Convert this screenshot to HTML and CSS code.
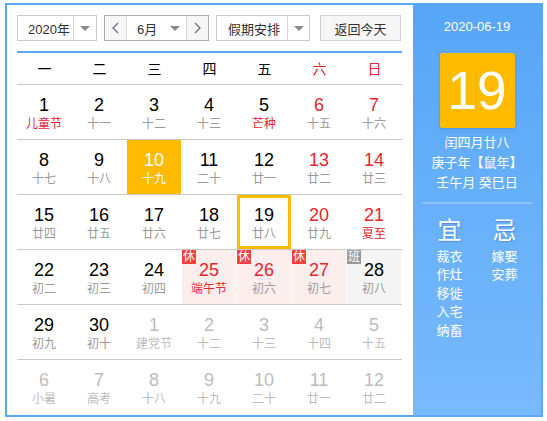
FILE: index.html
```html
<!DOCTYPE html>
<html lang="zh-CN">
<head>
<meta charset="utf-8">
<title>万年历</title>
<link rel="stylesheet" href="styles.css">
</head>
<body>
<div class="cal">
  <div class="main">
    <div class="controls">
      <div class="sel sel-year">
        <span class="sel-text">2020年</span>
        <span class="sel-arrow"><i class="tri"></i></span>
      </div>
      <div class="sel sel-month">
        <span class="mbtn"><svg width="7" height="12" viewBox="0 0 7 12"><path d="M6 1 L1 6 L6 11" fill="none" stroke="#6d6d7a" stroke-width="1.3"/></svg></span>
        <span class="sel-text month-text">6月</span>
        <span class="month-arrow"><i class="tri"></i></span>
        <span class="mbtn mbtn-r"><svg width="7" height="12" viewBox="0 0 7 12"><path d="M1 1 L6 6 L1 11" fill="none" stroke="#6d6d7a" stroke-width="1.3"/></svg></span>
      </div>
      <div class="sel sel-hol">
        <span class="sel-text">假期安排</span>
        <span class="sel-arrow"><i class="tri"></i></span>
      </div>
      <div class="btn-today">返回今天</div>
    </div>
    <div class="weekdays">
      <span>一</span><span>二</span><span>三</span><span>四</span><span>五</span><span class="we">六</span><span class="we">日</span>
    </div>
    <div class="rows">
      <div class="row">
        <div class="cell"><b>1</b><em class="fest">儿童节</em></div>
        <div class="cell"><b>2</b><em>十一</em></div>
        <div class="cell"><b>3</b><em>十二</em></div>
        <div class="cell"><b>4</b><em>十三</em></div>
        <div class="cell"><b>5</b><em class="fest">芒种</em></div>
        <div class="cell we"><b>6</b><em>十五</em></div>
        <div class="cell we"><b>7</b><em>十六</em></div>
      </div>
      <div class="row">
        <div class="cell"><b>8</b><em>十七</em></div>
        <div class="cell"><b>9</b><em>十八</em></div>
        <div class="cell today"><b>10</b><em>十九</em></div>
        <div class="cell"><b>11</b><em>二十</em></div>
        <div class="cell"><b>12</b><em>廿一</em></div>
        <div class="cell we"><b>13</b><em>廿二</em></div>
        <div class="cell we"><b>14</b><em>廿三</em></div>
      </div>
      <div class="row">
        <div class="cell"><b>15</b><em>廿四</em></div>
        <div class="cell"><b>16</b><em>廿五</em></div>
        <div class="cell"><b>17</b><em>廿六</em></div>
        <div class="cell"><b>18</b><em>廿七</em></div>
        <div class="cell selected"><b>19</b><em>廿八</em></div>
        <div class="cell we"><b>20</b><em>廿九</em></div>
        <div class="cell we"><b>21</b><em class="fest">夏至</em></div>
      </div>
      <div class="row">
        <div class="cell"><b>22</b><em>初二</em></div>
        <div class="cell"><b>23</b><em>初三</em></div>
        <div class="cell"><b>24</b><em>初四</em></div>
        <div class="cell rest"><span class="badge">休</span><b>25</b><em class="fest">端午节</em></div>
        <div class="cell rest"><span class="badge">休</span><b>26</b><em>初六</em></div>
        <div class="cell rest"><span class="badge">休</span><b>27</b><em>初七</em></div>
        <div class="cell work"><span class="badge">班</span><b>28</b><em>初八</em></div>
      </div>
      <div class="row">
        <div class="cell"><b>29</b><em>初九</em></div>
        <div class="cell"><b>30</b><em>初十</em></div>
        <div class="cell other"><b>1</b><em>建党节</em></div>
        <div class="cell other"><b>2</b><em>十二</em></div>
        <div class="cell other"><b>3</b><em>十三</em></div>
        <div class="cell other"><b>4</b><em>十四</em></div>
        <div class="cell other"><b>5</b><em>十五</em></div>
      </div>
      <div class="row">
        <div class="cell other"><b>6</b><em>小暑</em></div>
        <div class="cell other"><b>7</b><em>高考</em></div>
        <div class="cell other"><b>8</b><em>十八</em></div>
        <div class="cell other"><b>9</b><em>十九</em></div>
        <div class="cell other"><b>10</b><em>二十</em></div>
        <div class="cell other"><b>11</b><em>廿一</em></div>
        <div class="cell other"><b>12</b><em>廿二</em></div>
      </div>
    </div>
  </div>
  <div class="side">
    <div class="side-date">2020-06-19</div>
    <div class="side-day">19</div>
    <div class="side-lunar">
      <div>闰四月廿八</div>
      <div>庚子年【鼠年】</div>
      <div>壬午月 癸巳日</div>
    </div>
    <div class="side-sep"></div>
    <div class="yiji">
      <div class="yj-col">
        <div class="yj-head">宜</div>
        <div class="yj-item">裁衣</div>
        <div class="yj-item">作灶</div>
        <div class="yj-item">移徙</div>
        <div class="yj-item">入宅</div>
        <div class="yj-item">纳畜</div>
      </div>
      <div class="yj-col">
        <div class="yj-head">忌</div>
        <div class="yj-item">嫁娶</div>
        <div class="yj-item">安葬</div>
      </div>
    </div>
  </div>
</div>
</body>
</html>
```
FILE: styles.css
```css
* { box-sizing: border-box; }
body {
  margin: 0;
  background: #fff;
  font-family: "Liberation Sans", "Noto Sans CJK SC", sans-serif;
  color: #000;
}
.cal {
  margin: 3px 0 0 5px;
  width: 538px;
  height: 414px;
  border: 2px solid #5aa8f7;
  display: flex;
}
.main {
  width: 406px;
  flex: none;
  padding: 10px 11px 0 10px;
}
.controls {
  display: flex;
  height: 26px;
  margin-bottom: 10px;
  font-size: 13px;
  color: #333;
}
.sel {
  display: flex;
  height: 26px;
  border: 1px solid #c9c9c9;
  background: #fff;
  align-items: stretch;
}
.sel-text {
  display: flex;
  align-items: center;
  padding-left: 10px;
  white-space: nowrap;
}
.sel-arrow {
  display: flex;
  align-items: center;
  justify-content: center;
  border-left: 1px solid #d6d6d6;
}
.tri {
  width: 0;
  height: 0;
  border-left: 5px solid transparent;
  border-right: 5px solid transparent;
  border-top: 5px solid #8a8a8a;
}
.sel-year { width: 80px; margin-right: 7px; }
.sel-year .sel-text { width: 55px; }
.sel-year .sel-arrow { flex: 1; }
.sel-month { width: 105px; margin-right: 7px; border-color: #ababab; }
.mbtn {
  width: 22px;
  display: flex;
  align-items: center;
  justify-content: center;
  background: #f6f6f6;
  border-right: 1px solid #d6d6d6;
}
.mbtn-r { border-right: 0; border-left: 1px solid #d6d6d6; }
.month-text { width: 37px; padding-left: 10px; }
.month-arrow {
  width: 22px;
  display: flex;
  align-items: center;
  justify-content: center;
}
.sel-hol { width: 94px; margin-right: 10px; }
.sel-hol .sel-text { width: 70px; padding-left: 11px; }
.sel-hol .sel-arrow { flex: 1; }
.btn-today {
  width: 81px;
  height: 26px;
  border: 1px solid #d0d0d0;
  background: #f6f6f6;
  display: flex;
  align-items: center;
  justify-content: center;
}
.weekdays {
  border-top: 2px solid #5aa8f7;
  border-bottom: 1px solid #c8c8c8;
  height: 34px;
  display: flex;
  width: 385px;
  font-size: 14px;
}
.weekdays span {
  width: 55px;
  text-align: center;
  line-height: 32px;
}
.weekdays .we { color: #e6262e; }
.rows { width: 385px; }
.row {
  display: flex;
  height: 55px;
  border-bottom: 1px solid #c8c8c8;
}
.row:last-child { border-bottom: 0; height: 54px; }
.cell {
  position: relative;
  width: 54px;
  height: 54px;
  flex: none;
  margin-right: 1px;
  padding-top: 9px;
  text-align: center;
}
.cell:last-child { margin-right: 0; }
.cell b {
  display: block;
  font-weight: normal;
  font-size: 18px;
  line-height: 22px;
  color: #000;
}
.cell em {
  display: block;
  font-style: normal;
  font-size: 12px;
  line-height: 16px;
  color: #9a9a9a;
}
.cell.we b { color: #e6262e; }
.cell em.fest { color: #e6262e; }
.cell.today { background: #ffbb00; }
.cell.today b, .cell.today em { color: #fff; }
.cell.selected { border: 3px solid #ffbb00; padding-top: 6px; }
.cell.rest { background: #fdeeee; }
.cell.rest b { color: #e6262e; }
.cell.work { background: #f4f4f4; }
.badge {
  position: absolute;
  left: 0;
  top: 0;
  width: 14px;
  height: 14px;
  font-size: 12px;
  line-height: 14px;
  color: #fff;
  background: #f2403f;
  text-align: center;
}
.cell.work .badge { background: #9b9b9b; }
.cell.other b, .cell.other em { color: #bdbdbd; }
.side {
  flex: 1;
  margin-top: -2px;
  background: linear-gradient(#57a6f7, #78bafc);
  color: #fff;
  text-align: center;
  padding-top: 14px;
}
.side-date {
  font-size: 13px;
  line-height: 20px;
}
.side-day {
  width: 75px;
  height: 75px;
  margin: 16px auto 0;
  background: #ffbb00;
  border-radius: 2px;
  box-shadow: 0 1px 3px rgba(0, 0, 0, 0.15);
  font-size: 53px;
  line-height: 75px;
}
.side-lunar {
  margin-top: 5px;
  font-size: 13px;
  line-height: 20px;
}
.side-sep {
  width: 110px;
  height: 2px;
  margin: 9px auto 0;
  background: #8cc4fb;
}
.yiji {
  display: flex;
  justify-content: center;
  margin-top: 12px;
}
.yj-col { width: 55px; }
.yj-head {
  font-size: 24px;
  line-height: 30px;
  margin-bottom: 2px;
  text-shadow: 1px 1px 1px rgba(40, 80, 160, 0.35);
}
.yj-item {
  font-size: 13px;
  line-height: 18.4px;
}
```
